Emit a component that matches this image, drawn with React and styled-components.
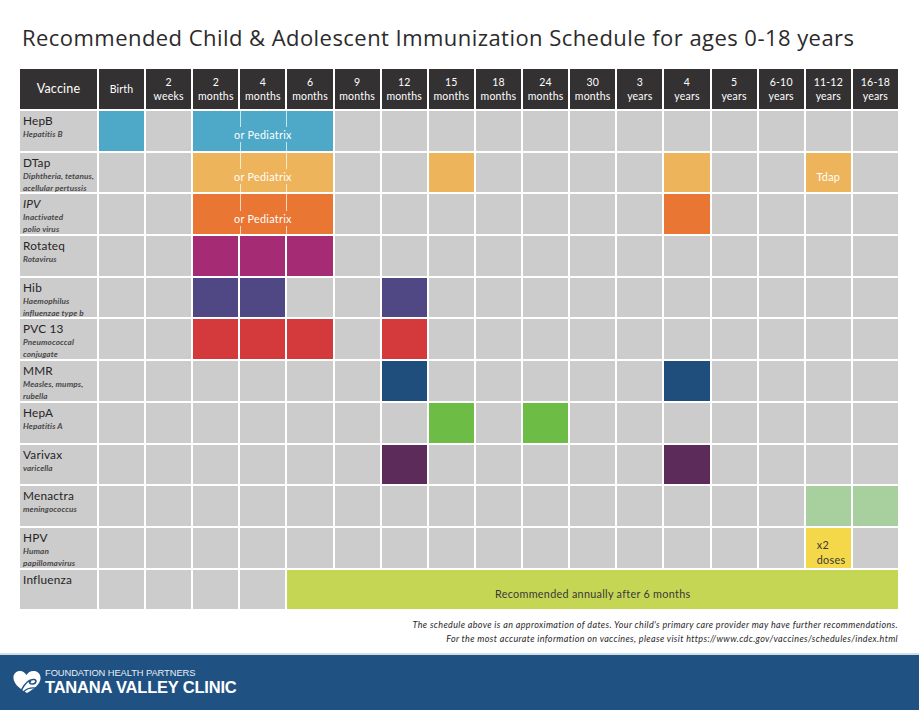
import React from 'react';
import styled, { createGlobalStyle } from 'styled-components';

const GlobalStyle = createGlobalStyle`
  html, body {
    margin: 0;
    padding: 0;
    background: #ffffff;
  }
  body {
    font-family: Lato, "Liberation Sans", sans-serif;
    color: #2f2d2e;
  }
`;

const Page = styled.div`
  width: 919px;
  height: 710px;
  display: flex;
  flex-direction: column;
  overflow: hidden;
`;

const Main = styled.main`
  flex: 1;
  padding: 22px 21px 0 20px;
  display: flex;
  flex-direction: column;
`;

const Title = styled.h1`
  margin: 0 0 17px 2px;
  font-family: "Open Sans", Inter, sans-serif;
  font-weight: 500;
  font-size: 22px;
  line-height: 30px;
  color: #2c2a2b;
  letter-spacing: 0.45px;
`;

const Grid = styled.div`
  display: grid;
  grid-template-columns: 77px repeat(17, 1fr);
  grid-template-rows: 40px;
  grid-auto-rows: 39.7px;
  gap: 2px;
`;

const HeadCell = styled.div`
  background: #333132;
  color: #ffffff;
  display: flex;
  flex-direction: column;
  align-items: center;
  justify-content: center;
  text-align: center;
  font-size: ${(p) => (p.$big ? '12.5px' : '10.5px')};
  line-height: 14px;
  letter-spacing: 0.2px;
`;

const NameCell = styled.div`
  background: #cccccc;
  padding: 2px 0 0 3px;
  display: flex;
  flex-direction: column;
`;

const Name = styled.span`
  font-size: 11.8px;
  line-height: 15px;
  color: #262425;
  letter-spacing: 0.2px;
  font-style: ${(p) => (p.$italic ? 'italic' : 'normal')};
`;

const Sub = styled.span`
  font-size: 8.2px;
  line-height: 12px;
  font-style: italic;
  font-weight: 700;
  color: #4a4849;
  letter-spacing: 0.1px;
`;

const Empty = styled.div`
  background: #cccccc;
`;

const Block = styled.div`
  grid-column: ${(p) => p.$col + 2} / span ${(p) => p.$span};
  background: ${(p) => p.$color};
  position: relative;
  display: flex;
  align-items: center;
  justify-content: ${(p) => (p.$left ? 'flex-start' : 'center')};
  padding: 8px 0 0 ${(p) => (p.$left ? '10px' : '0')};
  color: ${(p) => (p.$dark ? '#3a3838' : '#ffffff')};
  font-size: 10.8px;
  line-height: 15px;
  letter-spacing: 0.3px;
`;

const Segments = styled.div`
  position: absolute;
  inset: 0;
  display: grid;
  grid-template-columns: repeat(${(p) => p.$count}, 1fr);
`;

const Segment = styled.div`
  border-left: ${(p) => (p.$first ? 'none' : '1px solid rgba(255, 255, 255, 0.7)')};
`;

const Label = styled.span`
  position: relative;
  background: ${(p) => p.$color};
  padding: 0 1px;
`;

const Note = styled.p`
  margin: 9px 0 0;
  text-align: right;
  font-family: Lato, "Liberation Sans", sans-serif;
  font-style: italic;
  font-weight: 400;
  font-size: 9px;
  line-height: 14px;
  color: #2a2829;
  letter-spacing: 0.35px;
`;

const Footer = styled.footer`
  height: 55px;
  background: #1f5283;
  border-top: 2px solid #cfdde9;
  display: flex;
  align-items: center;
  padding: 0 0 0 12px;
`;

const Logo = styled.div`
  display: flex;
  align-items: center;
  gap: 3px;
  color: #ffffff;
  margin-top: -2px;
`;

const LogoText = styled.div`
  display: flex;
  flex-direction: column;
`;

const LogoSmall = styled.span`
  font-family: "Liberation Sans", Arial, sans-serif;
  font-weight: 300;
  font-size: 9.4px;
  line-height: 11px;
  letter-spacing: -0.1px;
  color: #e8eef5;
`;

const LogoBig = styled.span`
  font-family: "Liberation Sans", Arial, sans-serif;
  font-weight: 700;
  font-size: 16.5px;
  line-height: 19px;
  letter-spacing: -0.2px;
`;

const HeartMark = () => (
  <svg width="30" height="24" viewBox="0 0 30 24" aria-hidden="true">
    <path
      d="M15 23 C10 20 2 15 1.5 8.5 C1 3.5 4.5 1 8 1 C11 1 13 3 14.5 5 C16.5 2 19 0.5 22.5 1 C26.5 1.6 29 5 28.5 9 C28 14 22 19 15 23 Z"
      fill="#ffffff"
    />
    <path
      d="M9.5 20 C13 13 17.5 9 22 9.5 C25 9.8 24.5 13.5 21 14 C18 14.4 16.5 12.5 18.5 11.5"
      fill="none"
      stroke="#1f5283"
      strokeWidth="1.6"
      strokeLinecap="round"
    />
    <path
      d="M12 21.5 C15 18 19 17.5 24 18"
      fill="none"
      stroke="#1f5283"
      strokeWidth="1.2"
      strokeLinecap="round"
    />
  </svg>
);

const columns = [
  ['Birth'],
  ['2', 'weeks'],
  ['2', 'months'],
  ['4', 'months'],
  ['6', 'months'],
  ['9', 'months'],
  ['12', 'months'],
  ['15', 'months'],
  ['18', 'months'],
  ['24', 'months'],
  ['30', 'months'],
  ['3', 'years'],
  ['4', 'years'],
  ['5', 'years'],
  ['6-10', 'years'],
  ['11-12', 'years'],
  ['16-18', 'years'],
];

const vaccines = [
  {
    name: 'HepB',
    sub: ['Hepatitis B'],
    blocks: [
      { col: 0, color: '#4ea8c7' },
      { col: 2, span: 3, color: '#4ea8c7', label: 'or Pediatrix', split: true },
    ],
  },
  {
    name: 'DTap',
    sub: ['Diphtheria, tetanus,', 'acellular pertussis'],
    blocks: [
      { col: 2, span: 3, color: '#eeb45b', label: 'or Pediatrix', split: true },
      { col: 7, color: '#eeb45b' },
      { col: 12, color: '#eeb45b' },
      { col: 15, color: '#eeb45b', label: 'Tdap' },
    ],
  },
  {
    name: 'IPV',
    italic: true,
    sub: ['Inactivated', 'polio virus'],
    blocks: [
      { col: 2, span: 3, color: '#e97633', label: 'or Pediatrix', split: true },
      { col: 12, color: '#e97633' },
    ],
  },
  {
    name: 'Rotateq',
    sub: ['Rotavirus'],
    blocks: [
      { col: 2, color: '#a52b74' },
      { col: 3, color: '#a52b74' },
      { col: 4, color: '#a52b74' },
    ],
  },
  {
    name: 'Hib',
    sub: ['Haemophilus', 'influenzae type b'],
    blocks: [
      { col: 2, color: '#4f4884' },
      { col: 3, color: '#4f4884' },
      { col: 6, color: '#4f4884' },
    ],
  },
  {
    name: 'PVC 13',
    sub: ['Pneumococcal', 'conjugate'],
    blocks: [
      { col: 2, color: '#d43a3b' },
      { col: 3, color: '#d43a3b' },
      { col: 4, color: '#d43a3b' },
      { col: 6, color: '#d43a3b' },
    ],
  },
  {
    name: 'MMR',
    sub: ['Measles, mumps,', 'rubella'],
    blocks: [
      { col: 6, color: '#1f4e7d' },
      { col: 12, color: '#1f4e7d' },
    ],
  },
  {
    name: 'HepA',
    sub: ['Hepatitis A'],
    blocks: [
      { col: 7, color: '#6dbc45' },
      { col: 9, color: '#6dbc45' },
    ],
  },
  {
    name: 'Varivax',
    sub: ['varicella'],
    blocks: [
      { col: 6, color: '#5c2b59' },
      { col: 12, color: '#5c2b59' },
    ],
  },
  {
    name: 'Menactra',
    sub: ['meningococcus'],
    blocks: [
      { col: 15, color: '#a7d09e' },
      { col: 16, color: '#a7d09e' },
    ],
  },
  {
    name: 'HPV',
    sub: ['Human', 'papillomavirus'],
    blocks: [{ col: 15, color: '#f4d84a', lines: ['x2', 'doses'], dark: true, left: true }],
  },
  {
    name: 'Influenza',
    sub: [],
    blocks: [
      {
        col: 4,
        span: 13,
        color: '#c5d655',
        label: 'Recommended annually after 6 months',
        dark: true,
      },
    ],
  },
];

const renderRow = (v) => {
  const cells = [];
  let col = 0;
  const sorted = [...v.blocks].sort((a, b) => a.col - b.col);
  sorted.forEach((b, i) => {
    while (col < b.col) {
      cells.push(<Empty key={`e${col}`} />);
      col += 1;
    }
    const span = b.span || 1;
    cells.push(
      <Block
        key={`b${i}`}
        $col={b.col}
        $span={span}
        $color={b.color}
        $dark={b.dark}
        $left={b.left}
      >
        {b.split && (
          <Segments $count={span}>
            {Array.from({ length: span }).map((_, s) => (
              <Segment key={s} $first={s === 0} />
            ))}
          </Segments>
        )}
        {b.label && <Label $color={b.color}>{b.label}</Label>}
        {b.lines && (
          <Label $color={b.color}>
            {b.lines[0]}
            <br />
            {b.lines[1]}
          </Label>
        )}
      </Block>
    );
    col = b.col + span;
  });
  while (col < columns.length) {
    cells.push(<Empty key={`e${col}`} />);
    col += 1;
  }
  return cells;
};

const App = () => (
  <>
    <GlobalStyle />
    <Page>
      <Main>
        <Title>Recommended Child &amp; Adolescent Immunization Schedule for ages 0-18 years</Title>
        <Grid>
          <HeadCell $big>Vaccine</HeadCell>
          {columns.map((c) => (
            <HeadCell key={c.join(' ')}>
              {c.map((line) => (
                <span key={line}>{line}</span>
              ))}
            </HeadCell>
          ))}
          {vaccines.map((v) => (
            <React.Fragment key={v.name}>
              <NameCell>
                <Name $italic={v.italic}>{v.name}</Name>
                {v.sub.map((s) => (
                  <Sub key={s}>{s}</Sub>
                ))}
              </NameCell>
              {renderRow(v)}
            </React.Fragment>
          ))}
        </Grid>
        <Note>
          The schedule above is an approximation of dates. Your child's primary care provider may
          have further recommendations.
          <br />
          For the most accurate information on vaccines, please visit
          https://www.cdc.gov/vaccines/schedules/index.html
        </Note>
      </Main>
      <Footer>
        <Logo>
          <HeartMark />
          <LogoText>
            <LogoSmall>FOUNDATION HEALTH PARTNERS</LogoSmall>
            <LogoBig>TANANA VALLEY CLINIC</LogoBig>
          </LogoText>
        </Logo>
      </Footer>
    </Page>
  </>
);

export default App;
